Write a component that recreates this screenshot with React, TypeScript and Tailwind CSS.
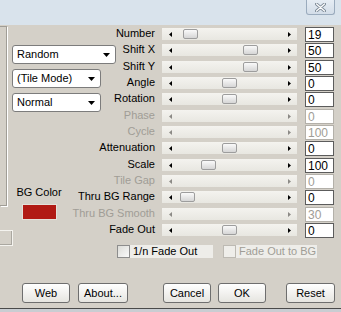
import React from 'react'

type Row = { label: string; value: string; h: string; thumb?: number; disabled?: boolean }

const rows: Row[] = [
  { label: 'Number', value: '19', h: 'h-[16px]', thumb: 21 },
  { label: 'Shift X', value: '50', h: 'h-[17px]', thumb: 81 },
  { label: 'Shift Y', value: '50', h: 'h-[16px]', thumb: 81 },
  { label: 'Angle', value: '0', h: 'h-[16px]', thumb: 60 },
  { label: 'Rotation', value: '0', h: 'h-[17px]', thumb: 60 },
  { label: 'Phase', value: '0', h: 'h-[16px]', disabled: true },
  { label: 'Cycle', value: '100', h: 'h-[16px]', disabled: true },
  { label: 'Attenuation', value: '0', h: 'h-[17px]', thumb: 60 },
  { label: 'Scale', value: '100', h: 'h-[16px]', thumb: 39 },
  { label: 'Tile Gap', value: '0', h: 'h-[16px]', disabled: true },
  { label: 'Thru BG Range', value: '0', h: 'h-[17px]', thumb: 18 },
  { label: 'Thru BG Smooth', value: '30', h: 'h-[16px]', disabled: true },
  { label: 'Fade Out', value: '0', h: 'h-[16px]', thumb: 60 },
]

function Combo({ text, width }: { text: string; width: string }) {
  return (
    <div className={`${width} h-[19px] flex items-center justify-between pl-[4px] pr-[5px] bg-white border border-[#7c7c7c] rounded-[3px] text-[11px] text-black`}>
      <span>{text}</span>
      <svg width="7" height="4" viewBox="0 0 7 4">
        <path d="M0 0h7L3.5 4z" fill="#000" />
      </svg>
    </div>
  )
}

function Slider({ thumb, disabled }: { thumb?: number; disabled?: boolean }) {
  const arrow = disabled ? '#8c8a86' : '#000'
  return (
    <div className="relative mt-[2px] w-[135px] h-[12px] flex items-center justify-between pl-[7px] pr-[6px] bg-gradient-to-b from-[#f4f3ef] to-[#e8e7e1]">
      <svg width="3" height="5" viewBox="0 0 3 5">
        <path d="M3 0v5L0 2.5z" fill={arrow} />
      </svg>
      <svg width="3" height="5" viewBox="0 0 3 5">
        <path d="M0 0v5l3-2.5z" fill={arrow} />
      </svg>
      {thumb !== undefined && (
        <div
          className="absolute top-[1px] w-[15px] h-[10px] rounded-[2px] border border-[#9d9d9d] bg-gradient-to-b from-[#fafafa] to-[#d6d6d6]"
          style={{ left: thumb }}
        />
      )}
    </div>
  )
}

function Button({ text, width, className = '' }: { text: string; width: string; className?: string }) {
  return (
    <div className={`${width} ${className} h-[20px] flex items-center justify-center rounded-[3px] border border-[#6e6e6e] bg-gradient-to-b from-[#ffffff] to-[#e6e5e0] text-[11px] text-black`}>
      {text}
    </div>
  )
}

export default function App() {
  return (
    <div className="w-[341px] h-[312px] overflow-hidden flex flex-col bg-[#d4d0c8] font-['Liberation_Sans',Arial,sans-serif] leading-none">
      {/* title bar */}
      <div className="h-[25px] shrink-0 flex justify-end pr-[6px] bg-[#d9e3ec]">
        <div className="w-[29px] h-[15px] flex items-center justify-center rounded-b-[3px] border border-t-0 border-[#9aabbd] bg-gradient-to-b from-[#e6edf4] to-[#d3dde8]">
          <svg width="11" height="9" viewBox="0 0 11 9">
            <path d="M1.5 1l8 7M9.5 1l-8 7" stroke="#7d8a97" strokeWidth="3" strokeLinecap="round" />
            <path d="M1.5 1l8 7M9.5 1l-8 7" stroke="#fff" strokeWidth="1.2" strokeLinecap="round" />
          </svg>
        </div>
      </div>

      <div className="grid">
        {/* left column */}
        <div className="col-start-1 row-start-1 flex">
          <div className="w-[7px] flex flex-col">
            <div className="mt-[1px] h-[180px] border-t border-r border-b border-[#a09d96] shadow-[1px_1px_0_#fff]" />
            <div className="mt-[24px] w-[13px] h-[16px] border-t border-r border-b border-[#f4f3ef] shadow-[inset_-1px_-1px_0_#aaa7a0]" />
          </div>
          <div className="ml-[5px] mt-[20px] flex flex-col">
            <Combo text="Random" width="w-[104px]" />
            <div className="mt-[5px]">
              <Combo text="(Tile Mode)" width="w-[89px]" />
            </div>
            <div className="mt-[5px]">
              <Combo text="Normal" width="w-[89px]" />
            </div>
            <div className="mt-[75px] w-[54px] flex flex-col items-center">
              <span className="text-[11px] text-black whitespace-nowrap">BG Color</span>
              <div className="mt-[6px] w-[35px] h-[16px] border border-[#e4e1da] bg-[#b11a14]" />
            </div>
          </div>
        </div>

        {/* rows */}
        <div className="col-start-1 row-start-1 flex flex-col pt-[1px]">
          {rows.map(r => (
            <div key={r.label} className={`${r.h} grid grid-cols-[162px_143px_29px] items-start`}>
              <span className={`mt-[1px] pr-[7px] leading-[13px] text-right text-[11px] whitespace-nowrap ${r.disabled ? 'text-[#a09d96]' : 'text-black'}`}>
                {r.label}
              </span>
              <Slider thumb={r.thumb} disabled={r.disabled} />
              <div className={`mt-[1px] h-[15px] flex items-center pl-[2px] bg-white border text-[12px] ${r.disabled ? 'border-[#b3b0a9] text-[#a09d96]' : 'border-[#5c5c5c] text-black'}`}>
                {r.value}
              </div>
            </div>
          ))}

          <div className="mt-[7px] pl-[117px] flex items-center h-[13px]">
            <div className="w-[13px] h-[13px] border border-[#8d8d8d] bg-gradient-to-br from-[#dcdcd8] to-[#fafafa]" />
            <div className="w-[83px] h-[13px] flex items-center pl-[3px] bg-[#eeede9] text-[11px] text-black">1/n Fade Out</div>
            <div className="ml-[10px] w-[13px] h-[13px] border border-[#bdbab3] bg-[#efeeea]" />
            <div className="w-[81px] h-[13px] flex items-center pl-[3px] bg-[#eeede9] text-[11px] text-[#a09d96] whitespace-nowrap">Fade Out to BG</div>
          </div>
        </div>
      </div>

      {/* buttons */}
      <div className="mt-[25px] pl-[22px] flex">
        <Button text="Web" width="w-[48px]" />
        <Button text="About..." width="w-[50px]" className="ml-[8px]" />
        <Button text="Cancel" width="w-[48px]" className="ml-[35px]" />
        <Button text="OK" width="w-[48px]" className="ml-[7px]" />
        <Button text="Reset" width="w-[49px]" className="ml-[20px]" />
      </div>

      <div className="mt-auto h-[4px] border-t border-[#4a4a4a] bg-[#c9cdd2]" />
    </div>
  )
}
